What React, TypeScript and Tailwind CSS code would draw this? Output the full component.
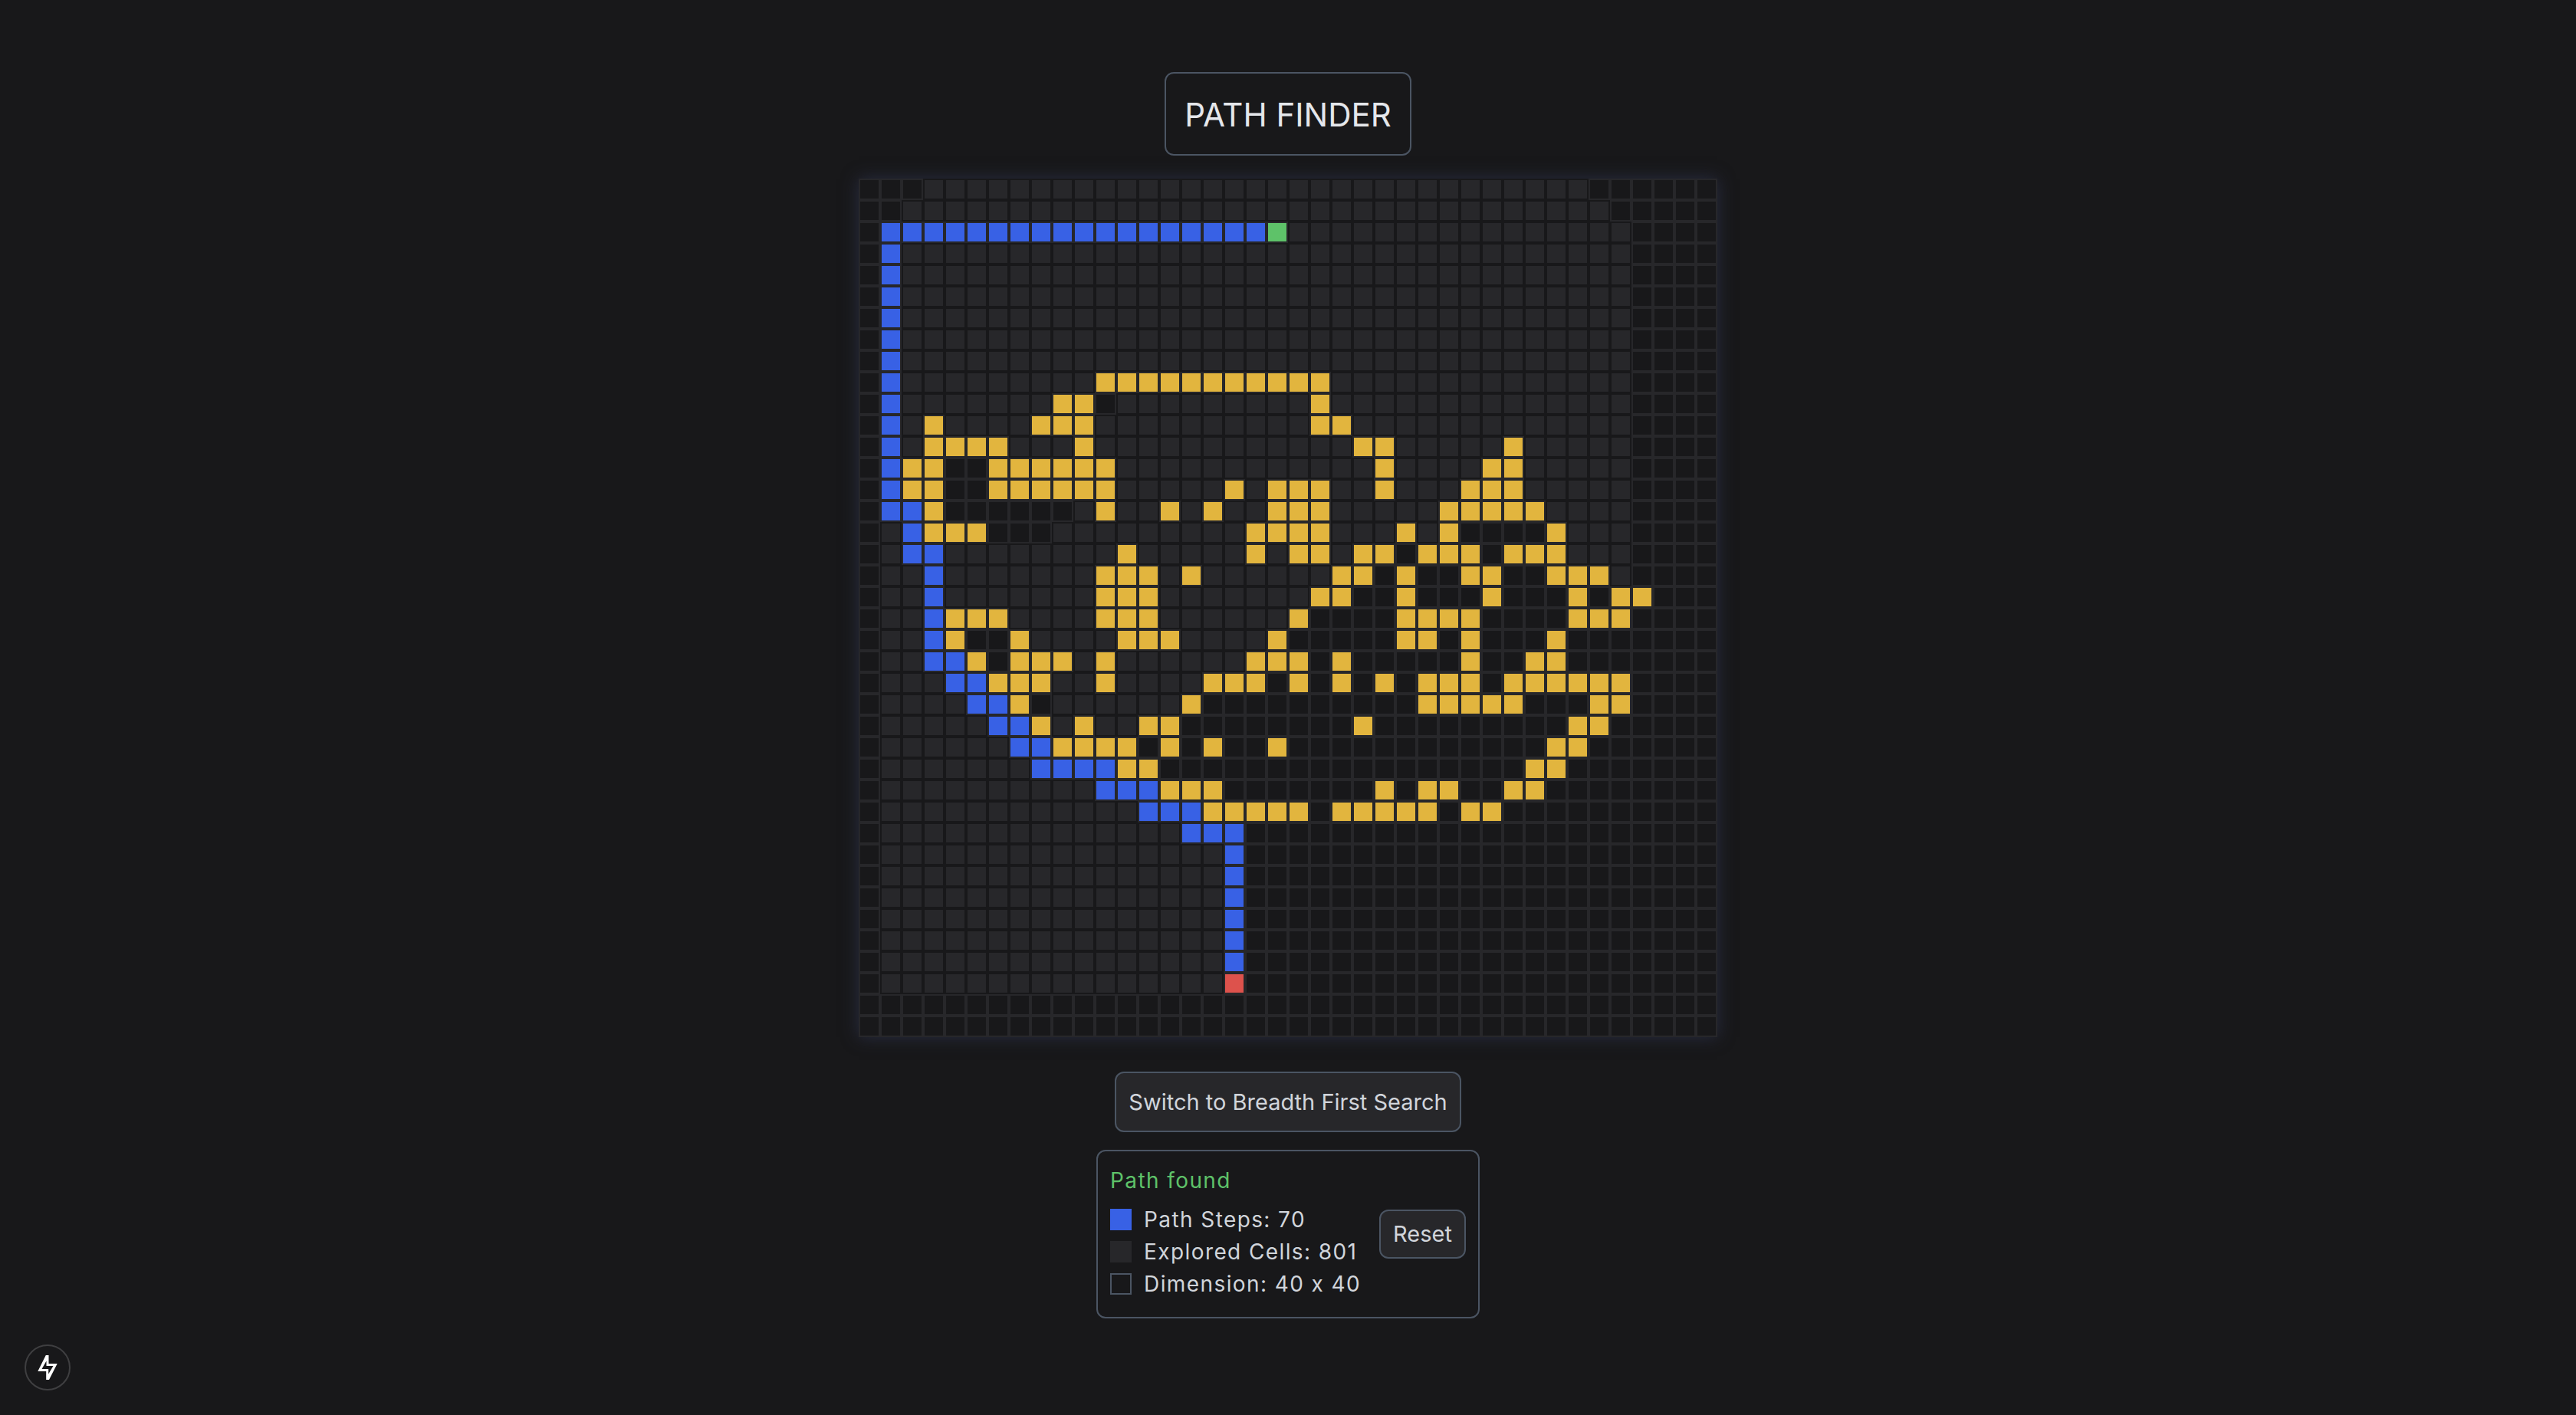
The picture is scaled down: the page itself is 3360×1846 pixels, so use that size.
import { useState } from "react";

type Cell = "." | "e" | "p" | "w" | "s" | "f";

const repeat = (row: string, times: number): string[] => Array(times).fill(row);

/* Each row is a list of runs: a count followed by the cell kind.
   . empty, e explored, p path, w wall, s start, f finish */
const ROWS: string[] = [
  "3. 31e 6.",
  "2. 33e 5.",
  "1. 18p 1s 16e 4.",
  ...repeat("1. 1p 34e 4.", 6),
  "1. 1p 9e 11w 14e 4.",
  "1. 1p 7e 2w 1. 9e 1w 14e 4.",
  "1. 1p 1e 1w 4e 3w 10e 2w 13e 4.",
  "1. 1p 1e 4w 3e 1w 12e 2w 5e 1w 5e 4.",
  "1. 1p 2w 2. 6w 12e 1w 4e 2w 5e 4.",
  "1. 1p 2w 2. 6w 5e 1w 1e 3w 2e 1w 3e 3w 5e 4.",
  "1. 2p 1w 6. 1e 1w 2e 1w 1e 1w 2e 3w 5e 5w 4e 4.",
  "1. 1e 1p 3w 3. 9e 4w 3e 1w 1e 1w 4. 1w 3e 4.",
  "1. 1e 2p 8e 1w 5e 1w 1e 2w 1e 2w 1. 3w 1. 3w 3e 4.",
  "1. 2e 1p 7e 3w 1e 1w 6e 2w 1. 1w 2. 2w 2. 3w 1e 4.",
  "1. 2e 1p 7e 3w 7e 2w 2. 1w 3. 1w 3. 1w 1. 2w 3.",
  "1. 2e 1p 3w 4e 3w 6e 1w 4. 4w 4. 3w 4.",
  "1. 2e 1p 1w 2. 1w 4e 3w 4e 1w 5. 2w 1. 1w 3. 1w 7.",
  "1. 2e 2p 1w 1. 3w 1e 1w 6e 3w 1. 1w 5. 1w 2. 2w 7.",
  "1. 3e 2p 3w 2e 1w 4e 3w 1. 1w 1. 1w 1. 1w 1. 3w 1. 6w 4.",
  "1. 4e 2p 1w 1. 6e 1w 10. 5w 3. 2w 4.",
  "1. 5e 2p 1w 1e 1w 2e 2w 8. 1w 9. 2w 5.",
  "1. 6e 2p 4w 1. 1w 1. 1w 2. 1w 12. 2w 6.",
  "1. 7e 4p 2w 17. 2w 7.",
  "1. 10e 3p 3w 7. 1w 1. 2w 2. 2w 8.",
  "1. 12e 3p 5w 1. 5w 1. 2w 10.",
  "1. 14e 3p 22.",
  ...repeat("1. 16e 1p 22.", 6),
  "1. 16e 1f 22.",
  ...repeat("40.", 2),
];

const CELLS: Cell[] = ROWS.flatMap((row) =>
  row.split(" ").flatMap((run) => Array<Cell>(parseInt(run, 10)).fill(run.slice(-1) as Cell)),
);

const CELL_STYLE: Record<Cell, string> = {
  ".": "bg-[#18181a] border-[#27272a]",
  e: "bg-[#27272a] border-[#18181a]",
  p: "bg-[#3861e5] border-[#27272a]",
  w: "bg-[#e2b53e] border-[#27272a]",
  s: "bg-[#5ec269] border-[#27272a]",
  f: "bg-[#dd524c] border-[#27272a]",
};

function Board() {
  return (
    <div
      role="img"
      aria-label="Maze of 40 by 40 cells"
      className="grid auto-rows-[28px] grid-cols-[repeat(40,28px)] shadow-[0_0_20px_#282c40]"
    >
      {CELLS.map((cell, i) => (
        <div key={i} className={`border-2 ${CELL_STYLE[cell]}`} />
      ))}
    </div>
  );
}

function Stat({ swatch, label }: { swatch: string; label: string }) {
  return (
    <li className="flex items-center gap-4">
      <span className={`size-7 ${swatch}`} />
      {label}
    </li>
  );
}

export default function App() {
  const [breadthFirst, setBreadthFirst] = useState(true);
  return (
    <main className="flex min-h-screen flex-col items-center bg-[#18181a] pt-[94px] font-[Inter,sans-serif] text-[#d1d5db]">
      <h1 className="rounded-xl border-2 border-[#4b5563] px-6 pt-[29px] pb-[27px] text-[42px] leading-[49px] text-[#e5e7eb]">
        PATH FINDER
      </h1>
      <div className="mt-[30px]">
        <Board />
      </div>
      <button
        type="button"
        onClick={() => setBreadthFirst(!breadthFirst)}
        className="mt-[45px] rounded-xl border-2 border-[#4b5563] bg-[#27272a] px-4 py-4 text-[29px] leading-[43px]"
      >
        Switch to {breadthFirst ? "Breadth" : "Depth"} First Search
      </button>
      <section className="mt-[23px] flex items-center gap-6 rounded-xl border-2 border-[#4b5563] p-4 text-[28px] leading-[42px]">
        <div className="tracking-wider">
          <p className="mb-2 leading-[44px] text-[#5ec269]">Path found</p>
          <ul className="mb-[6px]">
            <Stat swatch="bg-[#3861e5]" label="Path Steps: 70" />
            <Stat swatch="bg-[#27272a]" label="Explored Cells: 801" />
            <Stat swatch="border-2 border-[#4b5563]" label="Dimension: 40 x 40" />
          </ul>
        </div>
        <button
          type="button"
          className="rounded-xl border-2 border-[#4b5563] bg-[#27272a] px-4 py-2 text-[29px] leading-[44px]"
        >
          Reset
        </button>
      </section>
      <button
        type="button"
        aria-label="Open tools"
        className="fixed bottom-8 left-8 flex size-[60px] items-center justify-center rounded-full border-2 border-[#3f3f41] bg-[#18181a]"
      >
        <svg viewBox="0 0 32 32" className="size-8" fill="#ffffff" fillRule="evenodd" aria-hidden="true">
          <path d="M13.8 0H17.5V11H28.7L18 32H14.2V21H3.3ZM14.5 7.5L8.5 18H17.2V24.5L23.5 14H14.5Z" />
        </svg>
      </button>
    </main>
  );
}
